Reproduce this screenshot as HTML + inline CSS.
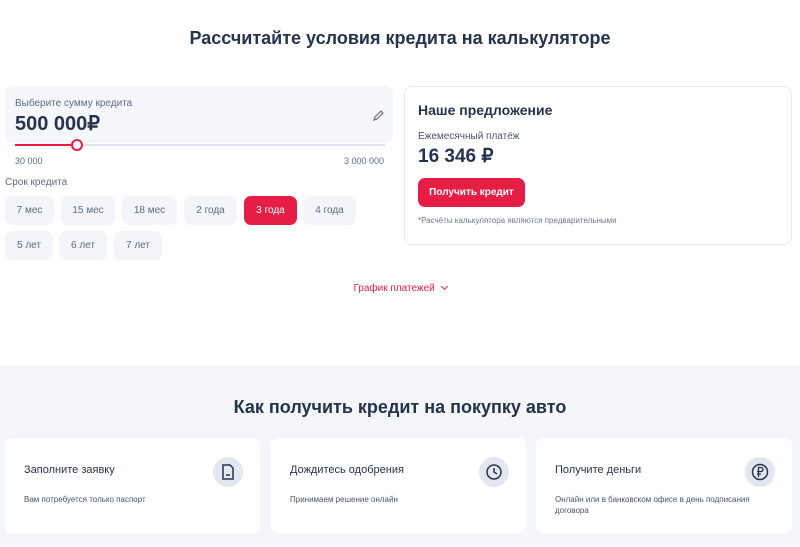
<!DOCTYPE html>
<html><head><meta charset="utf-8"><style>
*{margin:0;padding:0;box-sizing:border-box}
body{width:800px;height:547px;overflow:hidden;font-family:"Liberation Sans",sans-serif;background:#fff;color:#26334d;position:relative}
.a{position:absolute}
.chip{position:absolute;height:29px;border-radius:7px;background:#f3f5f9;color:#5d6b85;font-size:10px;text-align:center;line-height:29px}
.grey{position:absolute;left:0;top:365px;width:800px;height:182px;background:#f4f6fa}
.card{position:absolute;top:438px;height:95px;background:#fff;border-radius:7px}
.card .t{position:absolute;left:19px;top:26px;font-size:11px;color:#26334d}
.card .d{position:absolute;left:19px;top:56px;font-size:8px;color:#4a5568;line-height:11px;width:230px}
.card .ic{position:absolute;top:19px;width:30px;height:30px;border-radius:50%;background:#e3e8f0}
</style></head><body>
<div class="a" style="left:0;width:800px;top:28px;text-align:center;font-size:18px;font-weight:600;color:#26334d">Рассчитайте условия кредита на калькуляторе</div>

<div class="a" style="left:5px;top:86px;width:388px;height:57px;background:#f5f7fb;border-radius:8px"></div>
<div class="a" style="left:15px;top:98px;font-size:10px;color:#5d6b85">Выберите сумму кредита</div>
<div class="a" style="left:15px;top:111px;font-size:20px;font-weight:bold;color:#26334d">500 000₽</div>
<svg class="a" style="left:371px;top:109px" width="14" height="14" viewBox="0 0 14 14"><path d="M3 11 L4 8 L10 2 L12 4 L6 10 Z" fill="none" stroke="#6b778c" stroke-width="1.2"/></svg>
<div class="a" style="left:15px;top:144px;width:370px;height:2px;background:#dfe4ec"></div>
<div class="a" style="left:15px;top:144px;width:62px;height:2px;background:#e61e45"></div>
<div class="a" style="left:71px;top:139px;width:12px;height:12px;border-radius:50%;border:2px solid #e61e45;background:#fff"></div>
<div class="a" style="left:15px;top:156px;font-size:9px;color:#5d6b85">30 000</div>
<div class="a" style="right:416px;top:156px;font-size:9px;color:#5d6b85">3 000 000</div>
<div class="a" style="left:5px;top:177px;font-size:10px;color:#5d6b85">Срок кредита</div>
<div class="chip" style="left:5px;top:196px;width:49px">7 мес</div>
<div class="chip" style="left:61px;top:196px;width:54px">15 мес</div>
<div class="chip" style="left:122px;top:196px;width:55px">18 мес</div>
<div class="chip" style="left:184px;top:196px;width:53px">2 года</div>
<div class="chip" style="left:244px;top:196px;width:53px;background:#e61e45;color:#fff">3 года</div>
<div class="chip" style="left:303px;top:196px;width:53px">4 года</div>
<div class="chip" style="left:5px;top:231px;width:48px">5 лет</div>
<div class="chip" style="left:59px;top:231px;width:48px">6 лет</div>
<div class="chip" style="left:114px;top:231px;width:48px">7 лет</div>

<div class="a" style="left:404px;top:86px;width:388px;height:159px;border:1px solid #e6eaf0;border-radius:8px"></div>
<div class="a" style="left:418px;top:102px;font-size:14px;font-weight:600;color:#26334d">Наше предложение</div>
<div class="a" style="left:418px;top:131px;font-size:10px;color:#4a5568">Ежемесячный платёж</div>
<div class="a" style="left:418px;top:145px;font-size:19px;font-weight:bold;color:#26334d">16 346 ₽</div>
<div class="a" style="left:418px;top:178px;width:107px;height:29px;border-radius:7px;background:#e61e45;color:#fff;font-size:10px;font-weight:bold;text-align:center;line-height:29px">Получить кредит</div>
<div class="a" style="left:418px;top:216px;font-size:8px;color:#6b7a94">*Расчёты калькулятора являются предварительными</div>

<div class="a" style="left:0;width:800px;top:283px;text-align:center;font-size:10px;color:#e61e45">График платежей <span style="display:inline-block;width:5px;height:5px;border-right:1.3px solid #e61e45;border-bottom:1.3px solid #e61e45;transform:rotate(45deg);margin-left:4px;position:relative;top:-2px"></span></div>

<div class="grey"></div>
<div class="a" style="left:0;width:800px;top:397px;text-align:center;font-size:18px;font-weight:600;color:#26334d">Как получить кредит на покупку авто</div>

<div class="card" style="left:5px;width:255px"><div class="t">Заполните заявку</div><div class="d">Вам потребуется только паспорт</div>
<div class="ic" style="left:208px"><svg width="30" height="30" viewBox="0 0 30 30"><path d="M10 8 H17 L20 11 V22 H10 Z" fill="none" stroke="#26334d" stroke-width="1.5"/><path d="M13 18 H17" stroke="#26334d" stroke-width="1.5"/></svg></div></div>
<div class="card" style="left:271px;width:255px"><div class="t">Дождитесь одобрения</div><div class="d">Принимаем решение онлайн</div>
<div class="ic" style="left:208px"><svg width="30" height="30" viewBox="0 0 30 30"><circle cx="15" cy="15" r="7" fill="none" stroke="#26334d" stroke-width="1.5"/><path d="M15 11 V15 L18 17" fill="none" stroke="#26334d" stroke-width="1.5"/></svg></div></div>
<div class="card" style="left:536px;width:256px"><div class="t">Получите деньги</div><div class="d">Онлайн или в банковском офисе в день подписания договора</div>
<div class="ic" style="left:209px"><svg width="30" height="30" viewBox="0 0 30 30"><circle cx="15" cy="15" r="7.5" fill="none" stroke="#26334d" stroke-width="1.5"/><path d="M13.5 20 V10.5 H16 A2 2 0 0 1 16 14.5 H12 M12 17 H16" fill="none" stroke="#26334d" stroke-width="1.3"/></svg></div></div>
</body></html>
